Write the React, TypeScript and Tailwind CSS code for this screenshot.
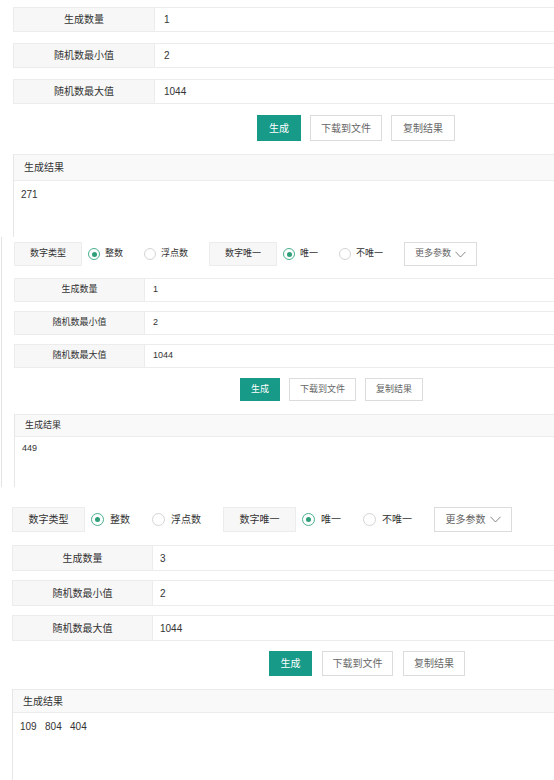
import React from "react";

type Cfg = {
    text: string;
    rowH: string;
    rowGap: string;
    labelW: string;
    valPad: string;
    btnRow: string;
    btnH: string;
    btnGap: string;
    btnW: [string, string, string];
    resMt: string;
    resHeadH: string;
    resBodyH: string;
    resBodyPt: string;
    radioH: string;
    radioLabelW: string;
    moreW: string;
    circle: string;
    dot: string;
    circleMl: string;
    textMl: string;
    itemMl: string;
};

const s1: Cfg = {
    text: "text-[10px]",
    rowH: "h-[25px]",
    rowGap: "mt-[11px]",
    labelW: "w-[141px]",
    valPad: "pl-[9px]",
    btnRow: "mt-[11px] pl-[244px]",
    btnH: "h-[26px]",
    btnGap: "gap-[9px]",
    btnW: ["w-[44px]", "w-[72px]", "w-[64px]"],
    resMt: "mt-[13px]",
    resHeadH: "h-[27px]",
    resBodyH: "h-[60px]",
    resBodyPt: "pt-[6px]",
    radioH: "h-[25px]",
    radioLabelW: "w-[73px]",
    moreW: "w-[78px]",
    circle: "w-[13px] h-[13px]",
    dot: "w-[5px] h-[5px]",
    circleMl: "ml-[6px]",
    textMl: "ml-[6px]",
    itemMl: "ml-[22px]",
};

const s2: Cfg = {
    text: "text-[9px]",
    rowH: "h-[24px]",
    rowGap: "mt-[9px]",
    labelW: "w-[130px]",
    valPad: "pl-[8px]",
    btnRow: "mt-[10px] pl-[226px]",
    btnH: "h-[23px]",
    btnGap: "gap-[9px]",
    btnW: ["w-[40px]", "w-[67px]", "w-[58px]"],
    resMt: "mt-[13px]",
    resHeadH: "h-[23px]",
    resBodyH: "h-[60px]",
    resBodyPt: "pt-[5px]",
    radioH: "h-[24px]",
    radioLabelW: "w-[68px]",
    moreW: "w-[73px]",
    circle: "w-[12px] h-[12px]",
    dot: "w-[5px] h-[5px]",
    circleMl: "ml-[6px]",
    textMl: "ml-[5px]",
    itemMl: "ml-[21px]",
};

const s3: Cfg = {
    text: "text-[10px]",
    rowH: "h-[26px]",
    rowGap: "mt-[9px]",
    labelW: "w-[140px]",
    valPad: "pl-[7px]",
    btnRow: "mt-[10px] pl-[257px]",
    btnH: "h-[25px]",
    btnGap: "gap-[10px]",
    btnW: ["w-[43px]", "w-[71px]", "w-[62px]"],
    resMt: "mt-[13px]",
    resHeadH: "h-[24px]",
    resBodyH: "h-[80px]",
    resBodyPt: "pt-[6px]",
    radioH: "h-[25px]",
    radioLabelW: "w-[73px]",
    moreW: "w-[78px]",
    circle: "w-[13px] h-[13px]",
    dot: "w-[5px] h-[5px]",
    circleMl: "ml-[6px]",
    textMl: "ml-[6px]",
    itemMl: "ml-[22px]",
};

function Row({ label, value, cfg, first }: { label: string; value: string; cfg: Cfg; first?: boolean }) {
    return (
        <div className={`flex border border-r-0 border-[#ececec] ${cfg.rowH} ${first ? "" : cfg.rowGap}`}>
            <div className={`flex items-center justify-center bg-[#f7f7f7] border-r border-[#ececec] text-[#333] ${cfg.labelW}`}>
                {label}
            </div>
            <div className={`flex-1 flex items-center bg-white text-[#333] ${cfg.valPad}`}>{value}</div>
        </div>
    );
}

function Radio({ checked, cfg }: { checked?: boolean; cfg: Cfg }) {
    return (
        <span
            className={`flex items-center justify-center rounded-full border bg-white shrink-0 ${cfg.circle} ${
                checked ? "border-[#49b08a]" : "border-[#d4d4d4]"
            }`}
        >
            {checked && <span className={`rounded-full bg-[#2f9f78] ${cfg.dot}`} />}
        </span>
    );
}

function RadioRow({ cfg }: { cfg: Cfg }) {
    const labelBox = `flex items-center justify-center bg-[#f7f7f7] border border-[#ececec] text-[#333] ${cfg.radioH} ${cfg.radioLabelW}`;
    return (
        <div className="flex items-center text-[#333]">
            <div className={labelBox}>数字类型</div>
            <span className={cfg.circleMl}>
                <Radio checked cfg={cfg} />
            </span>
            <span className={cfg.textMl}>整数</span>
            <span className={cfg.itemMl}>
                <Radio cfg={cfg} />
            </span>
            <span className={cfg.textMl}>浮点数</span>
            <div className={`${labelBox} ${cfg.itemMl}`}>数字唯一</div>
            <span className={cfg.circleMl}>
                <Radio checked cfg={cfg} />
            </span>
            <span className={cfg.textMl}>唯一</span>
            <span className={cfg.itemMl}>
                <Radio cfg={cfg} />
            </span>
            <span className={cfg.textMl}>不唯一</span>
            <div
                className={`flex items-center justify-center gap-[4px] bg-white border border-[#dcdcdc] text-[#666] ${cfg.radioH} ${cfg.moreW} ${cfg.itemMl}`}
            >
                <span>更多参数</span>
                <svg width="11" height="7" viewBox="0 0 11 7" fill="none">
                    <path d="M0.5 0.8 L5.5 6 L10.5 0.8" stroke="#777" strokeWidth="0.9" />
                </svg>
            </div>
        </div>
    );
}

function Block({ cfg, count, result, radio }: { cfg: Cfg; count: string; result: string; radio?: boolean }) {
    return (
        <div className={cfg.text}>
            {radio && <RadioRow cfg={cfg} />}
            <div className={radio ? (cfg === s2 ? "mt-[12px]" : "mt-[13px]") : ""}>
                <Row label="生成数量" value={count} cfg={cfg} first />
                <Row label="随机数最小值" value="2" cfg={cfg} />
                <Row label="随机数最大值" value="1044" cfg={cfg} />
            </div>
            <div className={`flex ${cfg.btnRow} ${cfg.btnGap}`}>
                <button className={`flex items-center justify-center bg-[#179a87] text-white ${cfg.btnH} ${cfg.btnW[0]}`}>
                    生成
                </button>
                <button
                    className={`flex items-center justify-center bg-white border border-[#dcdcdc] text-[#666] ${cfg.btnH} ${cfg.btnW[1]}`}
                >
                    下载到文件
                </button>
                <button
                    className={`flex items-center justify-center bg-white border border-[#dcdcdc] text-[#666] ${cfg.btnH} ${cfg.btnW[2]}`}
                >
                    复制结果
                </button>
            </div>
            <div className={`border-l border-[#e6e6e6] ${cfg.resMt}`}>
                <div className={`flex items-center pl-[10px] bg-[#f9f9f9] border-y border-[#ececec] text-[#333] ${cfg.resHeadH}`}>
                    生成结果
                </div>
                <div className={`pl-[7px] bg-white text-[#333] whitespace-pre ${cfg.resBodyH} ${cfg.resBodyPt}`}>{result}</div>
            </div>
        </div>
    );
}

export default function App() {
    return (
        <div
            className="w-[554px] h-[780px] overflow-hidden bg-white"
            style={{ fontFamily: '"Liberation Sans", "Noto Sans CJK SC", sans-serif' }}
        >
            <div className="h-[237px] overflow-hidden pl-[13px] pt-[7px]">
                <Block cfg={s1} count="1" result="271" />
            </div>
            <div className="h-[250px] overflow-hidden ml-[1px] border-l border-[#e3e3e3] pl-[12px] pt-[5px]">
                <Block cfg={s2} count="1" result="449" radio />
            </div>
            <div className="h-[293px] overflow-hidden pl-[12px] pt-[20px]">
                <Block cfg={s3} count="3" result={"109   804   404"} radio />
            </div>
        </div>
    );
}
